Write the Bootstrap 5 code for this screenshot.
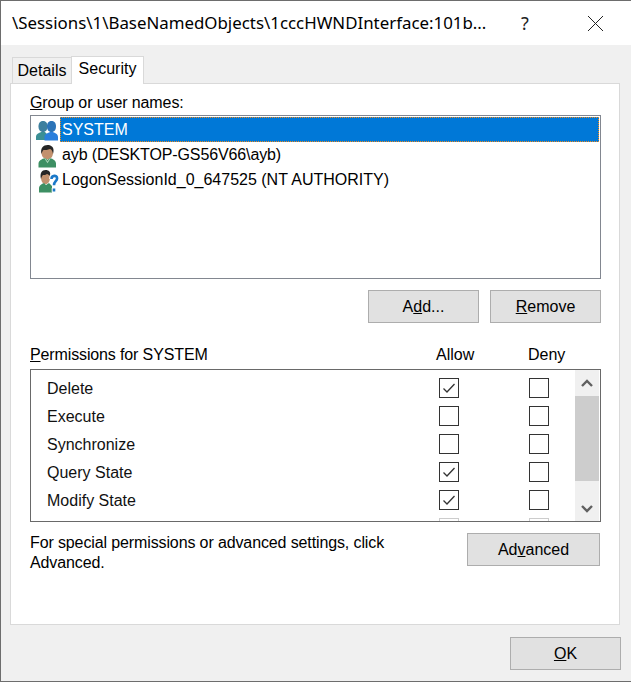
<!DOCTYPE html>
<html lang="en">
<head>
    <meta charset="UTF-8">
    <meta name="viewport" content="width=device-width, initial-scale=1.0">
    <title>Security</title>
    <link rel="stylesheet" href="https://cdn.jsdelivr.net/npm/bootstrap@5.3.0/dist/css/bootstrap.min.css">
    <style>
        body { margin: 0; background: #f0f0f0; font-family: "Liberation Sans", Arial, sans-serif; font-size: 16px; color: #000; }
        .dlg { width: 631px; height: 682px; background: #f0f0f0; border: solid #6d6d6d; border-width: 1px 0 1px 1px; overflow: hidden; }
        .dlg-title { height: 44px; background: #fff; padding-left: 11px; }
        .dlg-title-text { width: 500px; font-family: "Noto Sans", sans-serif; font-size: 16.88px; white-space: nowrap; }
        .dlg-help { width: 26px; text-align: center; font-family: "Noto Sans", sans-serif; font-size: 18px; color: #222; }
        .dlg-x { margin-left: 49px; }
        .tab-strip { height: 38px; padding-left: 11px; }
        .tab-item { background: #f0f0f0; border: 1px solid #d9d9d9; border-bottom: 0; height: 26px; line-height: 26px; width: 60px; text-align: center; }
        .tab-item.on { background: #fff; height: 28px; width: 73px; margin-left: -1px; margin-bottom: -1px; position: relative; line-height: 24px; }
        .tab-panel { margin-left: 9px; width: 610px; height: 542px; background: #fff; border: 1px solid #d9d9d9; padding: 0 18px 0 19px; }
        .grp-label { height: 31px; padding-top: 9px; line-height: 20px; letter-spacing: -.1px; }
        .user-box { height: 164px; border: 1px solid #828790; padding: 1px 1px 0 0; }
        .user-row { height: 25px; line-height: 25px; }
        .user-icon { width: 29px; flex: none; padding-left: 4px; }
        .user-name { flex: 1; padding-left: 2px; }
        .user-row.tight .user-name { letter-spacing: -.12px; }
        .user-row.sel .user-name { background: #0078d7; color: #fff; border: 1px dotted #f08a1c; line-height: 23px; padding-left: 1px; }
        .win-btn { background: #e1e1e1; border: 1px solid #adadad; border-radius: 0; color: #000; font-size: 16px; padding: 0; height: 33px; width: 111px; line-height: 31px; }
        .win-btn:hover { background: #e1e1e1; border-color: #adadad; color: #000; }
        .btn-line { margin-top: 11px; gap: 11px; }
        .perm-head { margin-top: 21px; height: 25px; line-height: 22px; }
        .perm-name { width: 406px; flex: none; letter-spacing: -.13px; }
        .perm-allow { width: 92px; flex: none; }
        .perm-box { height: 153px; border: 1px solid #696969; }
        .perm-rows { flex: 1; overflow: hidden; padding-top: 4px; }
        .perm-row { height: 28px; padding-left: 16px; }
        .perm-label { width: 392px; flex: none; color: #111; padding-top: 2px; }
        .perm-cell { width: 90px; flex: none; }
        .perm-box .form-check-input { width: 20px; height: 20px; margin: 0; border: 1px solid #333; border-radius: 0; background-color: #fff; box-shadow: none; opacity: 1; }
        .perm-box .form-check-input:checked { background-color: #fff; border-color: #333; background-size: 14px; background-image: url("data:image/svg+xml,%3csvg xmlns='http://www.w3.org/2000/svg' viewBox='0 0 14 14'%3e%3cpath fill='none' stroke='%23333' stroke-width='1.3' d='M1.5 7.5l3.5 3.5 7.5-8'/%3e%3c/svg%3e"); }
        .perm-box .form-check-input:disabled { border-color: #ccc; }
        .scroll-col { width: 24px; flex: none; margin-right: 1px; background: #f0f0f0; }
        .scroll-arrow { height: 26px; }
        .scroll-thumb { height: 85px; background: #cdcdcd; }
        .foot-line { margin-top: 11px; padding-right: 1px; }
        .foot-text { width: 400px; line-height: 20px; letter-spacing: -.12px; }
        .win-btn.wide { width: 133px; }
        .ok-line { padding: 12px 10px 0 0; }
    </style>
</head>
<body>
    <div class="dlg">
        <div class="dlg-title d-flex align-items-center">
            <div class="dlg-title-text">\Sessions\1\BaseNamedObjects\1cccHWNDInterface:101b...</div>
            <div class="dlg-help">?</div>
            <svg class="dlg-x" width="17" height="17" viewBox="0 0 17 17"><path d="M1 1l15 15M16 1L1 16" stroke="#222" fill="none"/></svg>
        </div>

        <div class="tab-strip d-flex align-items-end">
            <div class="tab-item">Details</div>
            <div class="tab-item on">Security</div>
        </div>

        <div class="tab-panel">
            <div class="grp-label"><u>G</u>roup or user names:</div>
            <div class="user-box">
                <div class="user-row sel d-flex">
                    <div class="user-icon">
                        <svg width="24" height="24" viewBox="0 0 24 24">
                            <path d="M3.500 7.500C3.500 3.500 5.500 2 8 2s4.500 1.500 4.500 5.500c0 3-1.500 5.500-4.500 5.500S3.500 10.500 3.500 7.500z" fill="#3d7f9e"/>
                            <path d="M1 21v-3c0-3 3-4 5-5h4l3 3v5z" fill="#3b8f95"/>
                            <path d="M12 7.500C12 3.500 14 2 16.500 2S21 3.500 21 7.500c0 3-1.500 5.500-4.500 5.500S12 10.500 12 7.500z" fill="#2c74b8"/>
                            <path d="M9.500 21.500v-3.500c0-3 3.500-4 5.500-5h3c2 1 5 2 5 5v3.500z" fill="#2a7fdc"/>
                        </svg>
                    </div>
                    <div class="user-name">SYSTEM</div>
                </div>
                <div class="user-row tight d-flex">
                    <div class="user-icon">
                        <svg width="24" height="24" viewBox="0 0 24 24">
                            <path d="M6.500 9.500C6.500 4 9 2 12.500 2s6 2.500 5.500 7.500c-.4 3.500-2.500 6-5.500 6s-5.600-2.500-6-6z" fill="#c2916e"/>
                            <path d="M6.500 10C5 4 8.500 1 12.500 1S20 3.500 18 10c-.5-3-1.500-4.500-3-5-2 1-5 1-6.500 1-1 1-1.500 2-2 4z" fill="#262626"/>
                            <path d="M3.500 23.500v-4c0-3 3.500-4.500 6.500-5.500l2.500 2 2.500-2c3 1 6 2.500 6 5.500v4z" fill="#3d8f63"/>
                            <path d="M10 14l2.500 3.500L15 14l.8.3-3.300 5-3.300-5z" fill="#a9d4b8"/>
                        </svg>
                    </div>
                    <div class="user-name">ayb (DESKTOP-GS56V66\ayb)</div>
                </div>
                <div class="user-row d-flex">
                    <div class="user-icon">
                        <svg width="24" height="24" viewBox="0 0 24 24">
                            <path d="M6 9C6 4 8 2 10.500 2S15 4 15 9c-.4 3.500-1.500 6-4.500 6S6.400 12.500 6 9z" fill="#c2916e"/>
                            <path d="M6 10C4.500 4 7 1 10.500 1S16 3 15 7c-1-1-2-2-3-2-1 1-3 1-4 1-1 1-1.500 2-2 4z" fill="#262626"/>
                            <path d="M4 23.500v-4c0-3 2.500-4.500 5-5.500l2 2 3-2 3 3v6.500z" fill="#3d8f63"/>
                            <path d="M16.500 10c0-5 6-5 6-.8 0 3.300-3.500 3.300-3.500 7M19 19v4" fill="none" stroke="#fff" stroke-width="4.600"/>
                            <path d="M16.500 10c0-4 5.600-4 5.600-.8 0 3-3.100 3-3.100 7M19 19.500v3" fill="none" stroke="#1b78c8" stroke-width="2.600"/>
                        </svg>
                    </div>
                    <div class="user-name">LogonSessionId_0_647525 (NT AUTHORITY)</div>
                </div>
            </div>

            <div class="btn-line d-flex justify-content-end">
                <button class="btn win-btn">A<u>d</u>d...</button>
                <button class="btn win-btn"><u>R</u>emove</button>
            </div>

            <div class="perm-head d-flex">
                <div class="perm-name"><u>P</u>ermissions for SYSTEM</div>
                <div class="perm-allow">Allow</div>
                <div>Deny</div>
            </div>

            <div class="perm-box d-flex">
                <div class="perm-rows" id="permRows"></div>
                <div class="scroll-col d-flex flex-column">
                    <div class="scroll-arrow d-flex align-items-center justify-content-center">
                        <svg width="12" height="9" viewBox="0 0 12 9"><path d="M1 7l5-5 5 5" fill="none" stroke="#606060" stroke-width="2.400"/></svg>
                    </div>
                    <div class="scroll-thumb"></div>
                    <div class="flex-grow-1 d-flex align-items-end justify-content-center pb-2">
                        <svg width="12" height="9" viewBox="0 0 12 9"><path d="M1 2l5 5 5-5" fill="none" stroke="#606060" stroke-width="2.400"/></svg>
                    </div>
                </div>
            </div>

            <div class="foot-line d-flex justify-content-between">
                <div class="foot-text">For special permissions or advanced settings, click Advanced.</div>
                <button class="btn win-btn wide">Ad<u>v</u>anced</button>
            </div>
        </div>

        <div class="ok-line d-flex justify-content-end">
            <button class="btn win-btn"><u>O</u>K</button>
        </div>
    </div>
<script src="https://cdn.jsdelivr.net/npm/bootstrap@5.3.0/dist/js/bootstrap.bundle.min.js"></script>
<script>
    const perms = [
        ['Delete', true],
        ['Execute', false],
        ['Synchronize', false],
        ['Query State', true],
        ['Modify State', true],
        ['', false]
    ];

    var rows = ``;
    perms.map((value, index) => {
        let off = index == 5 ? 'disabled' : '';
        rows += `
        <div class="perm-row d-flex align-items-center">
            <div class="perm-label">${value[0]}</div>
            <div class="perm-cell"><input class="form-check-input d-block" type="checkbox" ${value[1] ? 'checked' : ''} ${off}></div>
            <div class="perm-cell"><input class="form-check-input d-block" type="checkbox" ${off}></div>
        </div>`;
    });
    document.querySelector('#permRows').innerHTML = rows;
</script>
</body>
</html>
